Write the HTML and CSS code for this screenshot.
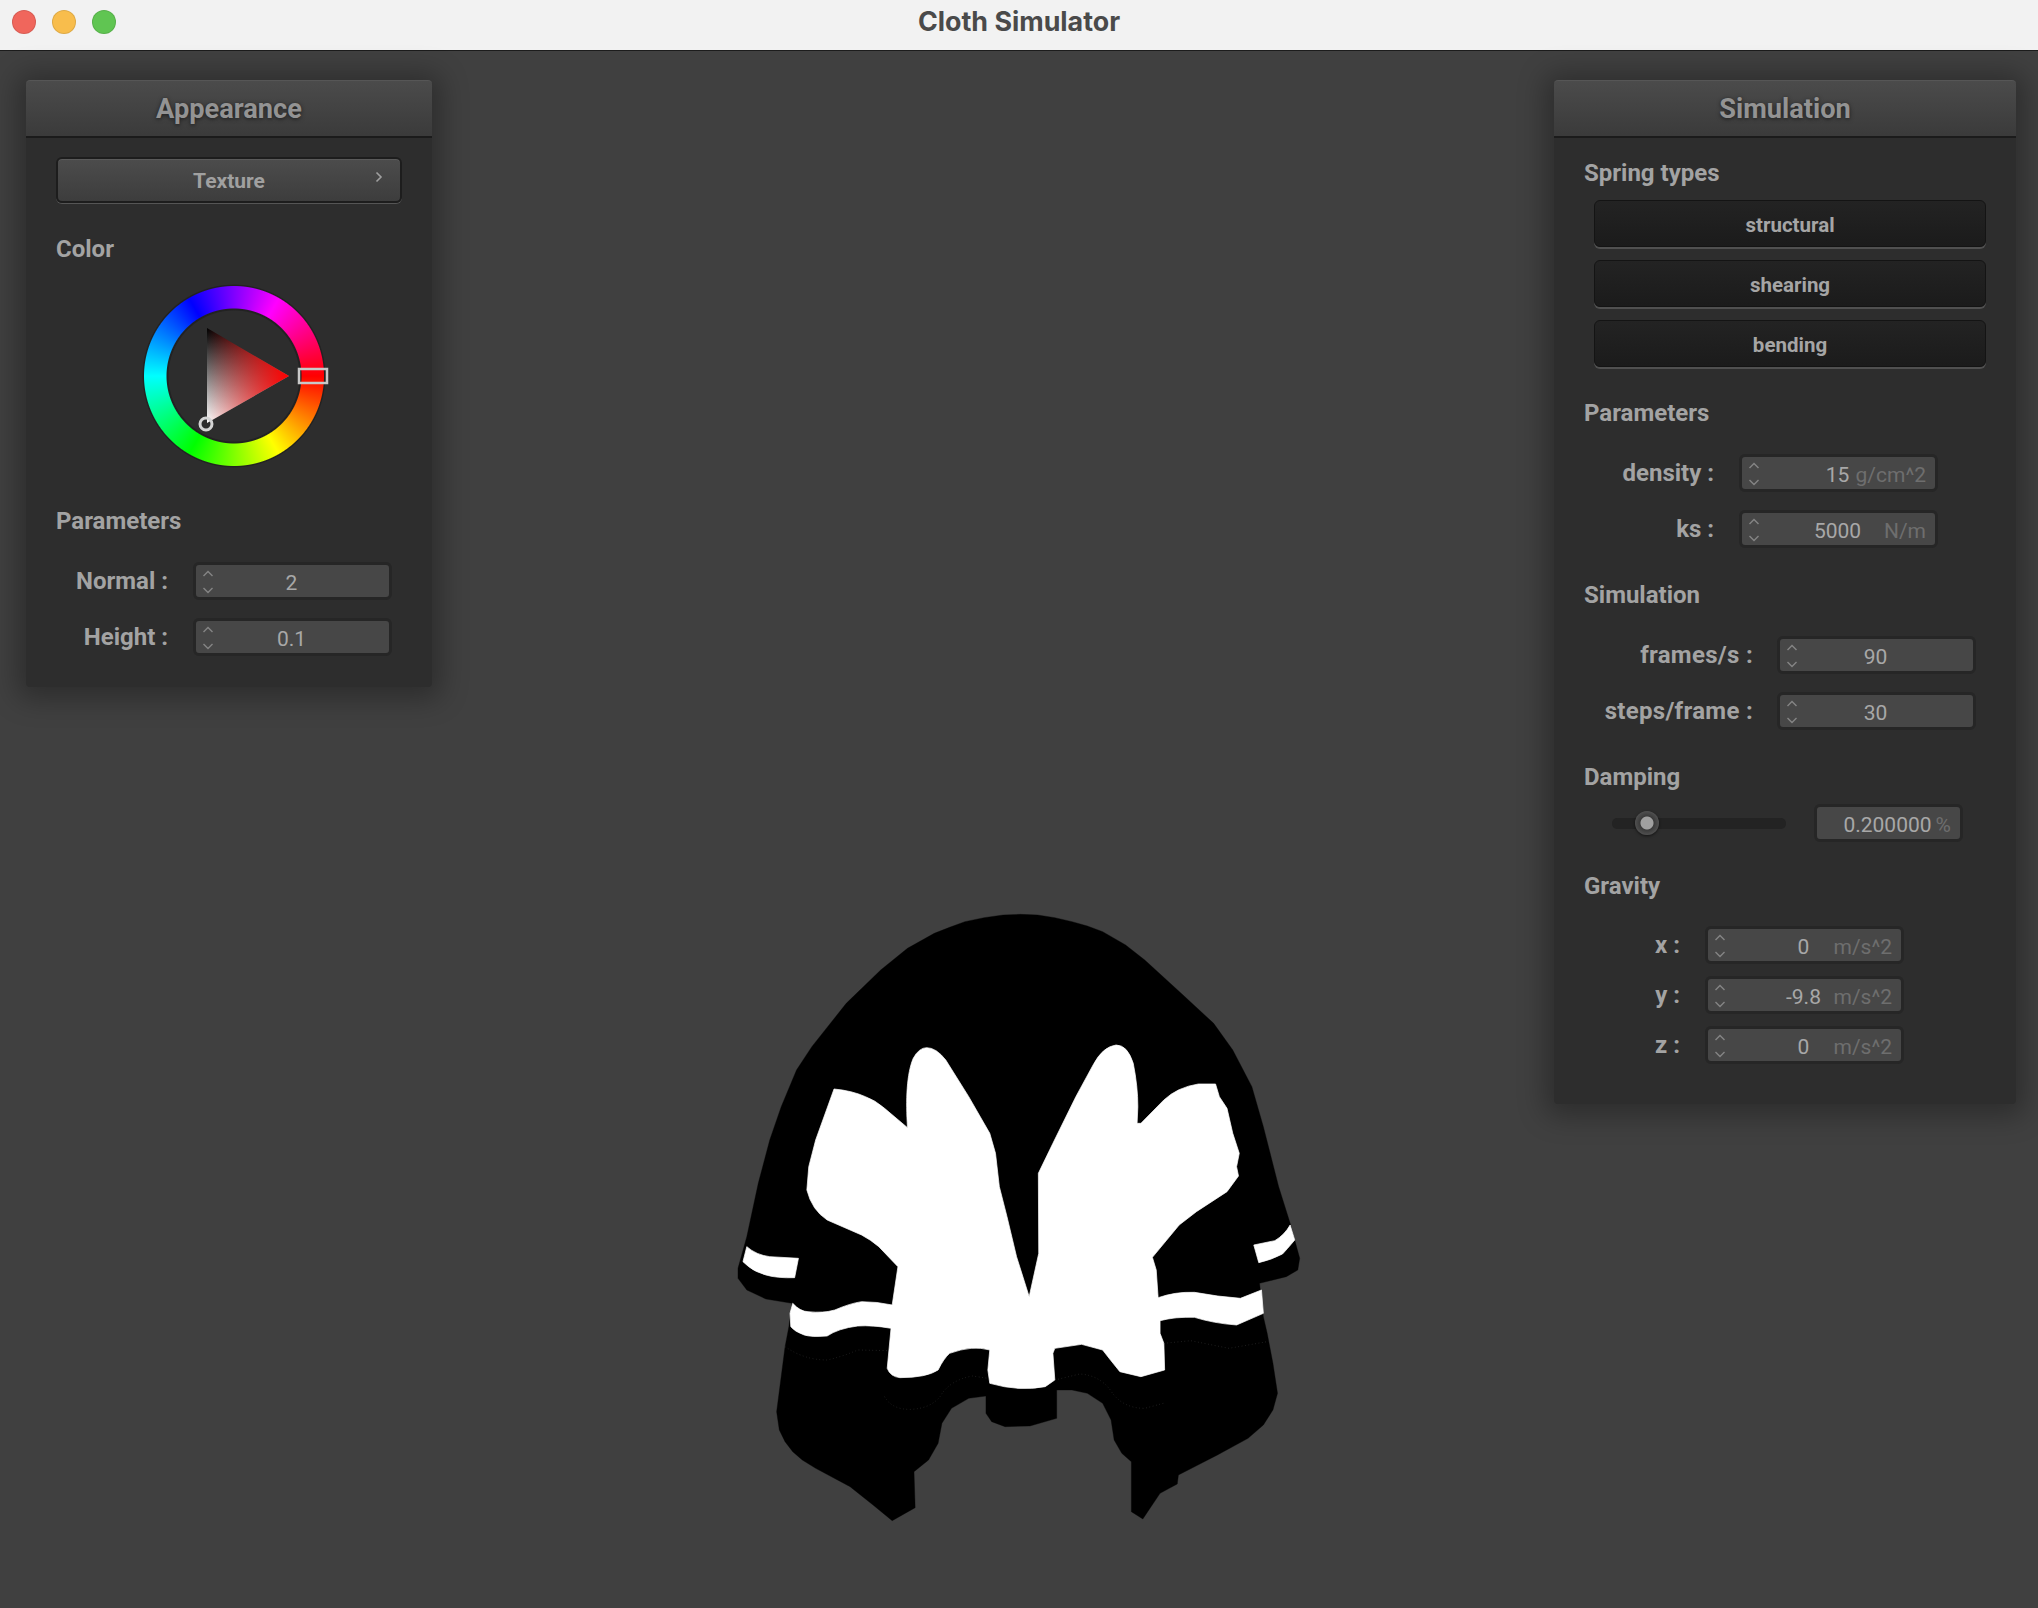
FILE: index.html
```html
<!DOCTYPE html>
<html lang="en">
<head>
<meta charset="utf-8">
<title>Cloth Simulator</title>
<link rel="stylesheet" href="styles.css">
</head>
<body>
<svg class="defs" width="0" height="0" aria-hidden="true">
  <symbol id="spin" viewBox="0 0 12 24">
    <path d="M1.5 6 L6 1.5 L10.500 6 M1.500 18 L6 22.500 L10.500 18" fill="none" stroke="currentColor" stroke-width="1.400"/>
  </symbol>
</svg>
<div class="app">
  <header class="titlebar">
    <div class="lights">
      <span class="light light-red"></span>
      <span class="light light-yellow"></span>
      <span class="light light-green"></span>
    </div>
    <h1 class="title">Cloth Simulator</h1>
  </header>
  <main class="canvas">
    <svg class="cloth" width="2038" height="1557" viewBox="0 51 2038 1557" aria-hidden="true">
      <g transform="translate(720 900) scale(.38265 .33333)">
        <polygon class="c-black" points="47,1105 70,1010 100,850 130,720 160,620 200,510 240,440 330,310 420,210 490,145 560,100 600,82 640,65 690,53 740,45 785,43 830,45 875,53 920,65 960,78 1000,95 1060,135 1110,180 1210,285 1290,370 1340,450 1390,560 1420,680 1460,860 1490,970 1515,1075 1510,1110 1480,1130 1410,1150 1420,1250 1430,1300 1445,1390 1457,1480 1445,1530 1420,1575 1380,1615 1300,1665 1198,1725 1195,1752 1150,1780 1105,1857 1075,1835 1075,1685 1050,1660 1030,1620 1022,1560 1000,1510 960,1480 920,1470 880,1470 880,1555 810,1578 745,1580 710,1565 695,1540 695,1488 650,1495 605,1525 580,1570 570,1630 545,1680 507,1715 510,1823 450,1862 400,1815 340,1760 250,1705 215,1680 190,1655 170,1625 155,1590 148,1535 170,1340 180,1280 188,1210 120,1197 70,1170 47,1135"/>
        <path class="c-white" d="M490,683 C485,600 488,520 505,475 Q520,443 540,443 Q565,443 590,480 L650,590 L705,700 L720,760 L730,860 L750,950 L775,1070 L808,1190 L833,1060 L832,820 L870,730 L930,590 L975,495 Q1000,440 1035,435 Q1065,435 1080,490 Q1092,560 1092,620 L1090,670 L1100,670 L1160,600 Q1195,562 1250,552 L1295,552 L1305,590 L1325,625 L1340,700 L1357,760 L1350,800 L1355,828 L1325,875 L1245,935 L1200,975 L1130,1072 L1140,1110 L1145,1193 Q1190,1175 1240,1177 Q1300,1190 1360,1195 L1415,1170 L1420,1240 L1350,1275 Q1290,1270 1240,1252 Q1190,1250 1150,1262 L1150,1300 L1160,1330 L1162,1410 L1100,1430 L1045,1415 Q1020,1380 1000,1350 L945,1333 L875,1345 L870,1360 L875,1440 L850,1460 Q780,1475 705,1450 L700,1410 L705,1350 Q660,1335 600,1360 Q585,1375 570,1410 Q540,1433 470,1433 Q445,1430 437,1405 L447,1285 Q400,1275 360,1278 Q310,1285 280,1308 Q240,1312 220,1305 Q195,1295 185,1280 L183,1240 L190,1210 Q210,1235 230,1235 Q270,1240 300,1230 Q340,1210 370,1205 Q410,1205 450,1215 L465,1100 L415,1040 Q395,1020 370,1005 L280,960 Q240,930 227,870 L232,800 L250,720 L298,567 Q345,572 380,590 Q405,600 430,625 Z"/>
        <path class="c-white" d="M70,1040 Q95,1065 130,1070 L205,1075 L195,1133 Q150,1135 120,1125 Q90,1115 75,1100 L60,1085 Z"/>
        <path class="c-white" d="M1395,1035 L1450,1022 Q1475,1005 1490,975 L1502,1020 Q1480,1050 1470,1062 Q1440,1080 1408,1088 Z"/>
        <path class="c-seam" d="M170 1340 Q220 1380 280 1380 Q320 1370 360 1350 L440 1352 M430 1490 Q450 1530 500 1528 Q550 1525 575 1490 Q600 1440 660 1428 L700 1435 M875 1440 L940 1422 Q990 1425 1020 1470 Q1050 1525 1110 1525 L1165 1508 M1160 1330 L1230 1322 L1330 1345 L1430 1325"/>
      </g>
    </svg>

    <section class="panel panel-appearance">
      <h2 class="panel-head">Appearance</h2>
      <div class="panel-body">
        <button class="popup">Texture<svg class="popup-chevron" width="8" height="12" viewBox="0 0 8 12"><path d="M1.500 1.500 L6 6 L1.500 10.500" fill="none" stroke="currentColor" stroke-width="1.600"/></svg></button>
        <h3 class="label label-color">Color</h3>
        <div class="wheel">
          <div class="wheel-ring"></div>
          <svg class="wheel-marks" width="184" height="184" viewBox="142 284 184 184" aria-hidden="true">
            <defs>
              <linearGradient id="tri-v" gradientUnits="userSpaceOnUse" x1="0" y1="328" x2="0" y2="423">
                <stop offset="0" stop-color="#000"/><stop offset="1" stop-color="#fff"/>
              </linearGradient>
              <linearGradient id="tri-h" gradientUnits="userSpaceOnUse" x1="207" y1="0" x2="289" y2="0">
                <stop offset="0" stop-color="#f00" stop-opacity="0"/><stop offset="1" stop-color="#f00"/>
              </linearGradient>
            </defs>
            <polygon points="207,328 289,376 207,423" fill="url(#tri-v)"/>
            <polygon points="207,328 289,376 207,423" fill="url(#tri-h)"/>
            <rect x="299" y="369" width="28" height="14" class="hue-mark"/>
            <circle cx="206" cy="424" r="6" class="sv-mark"/>
          </svg>
        </div>
        <h3 class="label label-params">Parameters</h3>
        <div class="rows">
          <div class="row row-app"><span class="row-name">Normal :</span><div class="field"><svg class="spin"><use href="#spin"/></svg><span class="value">2</span></div></div>
          <div class="row row-app"><span class="row-name">Height :</span><div class="field"><svg class="spin"><use href="#spin"/></svg><span class="value">0.1</span></div></div>
        </div>
      </div>
    </section>

    <section class="panel panel-simulation">
      <h2 class="panel-head">Simulation</h2>
      <div class="panel-body">
        <h3 class="label label-springs">Spring types</h3>
        <div class="toggles">
          <button class="toggle">structural</button>
          <button class="toggle">shearing</button>
          <button class="toggle">bending</button>
        </div>
        <h3 class="label label-s-params">Parameters</h3>
        <div class="rows">
          <div class="row row-param"><span class="row-name">density :</span><div class="field"><svg class="spin"><use href="#spin"/></svg><span class="value">15</span><span class="unit">g/cm^2</span></div></div>
          <div class="row row-param"><span class="row-name">ks :</span><div class="field"><svg class="spin"><use href="#spin"/></svg><span class="value">5000</span><span class="unit">N/m</span></div></div>
        </div>
        <h3 class="label label-s-sim">Simulation</h3>
        <div class="rows">
          <div class="row row-sim"><span class="row-name">frames/s :</span><div class="field"><svg class="spin"><use href="#spin"/></svg><span class="value">90</span></div></div>
          <div class="row row-sim"><span class="row-name">steps/frame :</span><div class="field"><svg class="spin"><use href="#spin"/></svg><span class="value">30</span></div></div>
        </div>
        <h3 class="label label-s-damp">Damping</h3>
        <div class="damping">
          <div class="slider"><span class="knob"></span></div>
          <div class="field field-damp"><span class="value">0.200000</span><span class="unit">%</span></div>
        </div>
        <h3 class="label label-s-grav">Gravity</h3>
        <div class="rows rows-tight">
          <div class="row row-grav"><span class="row-name">x :</span><div class="field"><svg class="spin"><use href="#spin"/></svg><span class="value">0</span><span class="unit">m/s^2</span></div></div>
          <div class="row row-grav"><span class="row-name">y :</span><div class="field"><svg class="spin"><use href="#spin"/></svg><span class="value">-9.8</span><span class="unit">m/s^2</span></div></div>
          <div class="row row-grav"><span class="row-name">z :</span><div class="field"><svg class="spin"><use href="#spin"/></svg><span class="value">0</span><span class="unit">m/s^2</span></div></div>
        </div>
      </div>
    </section>
  </main>
</div>
</body>
</html>
```
FILE: styles.css
```css
* { box-sizing: border-box; }
html, body { margin: 0; height: 100%; }
body { background: #404040; font-family: Roboto, "Liberation Sans", sans-serif; overflow: hidden; }
.defs { position: absolute; }
.app { width: 2038px; height: 1608px; display: flex; flex-direction: column; }

.titlebar { height: 51px; flex: none; display: flex; align-items: center; justify-content: center; background: #f2f2f2; border-bottom: 1px solid #1c1c1c; position: relative; }
.lights { position: absolute; left: 12px; top: 10px; display: flex; gap: 16px; }
.light { width: 24px; height: 24px; border-radius: 50%; border: 1px solid rgba(0,0,0,.1); }
.light-red { background: #f0665c; }
.light-yellow { background: #f8bd4c; }
.light-green { background: #60c552; }
.title { margin: 0 0 9px; font: 700 26.800px Inter, Roboto, sans-serif; color: #4a4a4a; }

.canvas { flex: 1; position: relative; background: #404040; }
.cloth { position: absolute; left: 0; top: 0; }
.c-black { fill: #000; stroke: #000; stroke-linejoin: round; }
.c-white { fill: #fff; stroke: #fff; stroke-width: 2; stroke-linejoin: round; }
.c-seam { fill: none; stroke: #484848; stroke-width: 1.500; stroke-dasharray: 2 7; }

.panel { position: absolute; top: 29px; background: #2d2d2d; box-shadow: 0 3px 28px 9px rgba(0,0,0,.3); border-radius: 4px; display: flex; flex-direction: column; }
.panel-appearance { left: 26px; width: 406px; }
.panel-simulation { left: 1554px; width: 462px; }
.panel-head { margin: 0; height: 58px; padding-bottom: 2px; display: flex; align-items: center; justify-content: center; font: 700 27.200px Roboto, sans-serif; color: #939393; text-shadow: 0 1px 4px rgba(0,0,0,.6); background: linear-gradient(#4b4b4b, #3a3a3a); border-top: 1px solid #565656; border-radius: 4px 4px 0 0; box-shadow: inset 0 -3px 0 -1px #1b1b1b; }
.panel-body { display: flex; flex-direction: column; padding: 0 30px; }
.panel-appearance .panel-body { padding-bottom: 31px; }
.panel-simulation .panel-body { padding-bottom: 40px; }

.label { margin: 0; height: 30px; font: 700 24px/30px Roboto, sans-serif; color: #a3a3a3; }
.label-color { margin-top: 31px; }
.label-params { margin-top: 38px; }
.label-springs { margin-top: 20px; }
.label-s-params { margin-top: 31px; }
.label-s-sim { margin-top: 32px; }
.label-s-damp { margin-top: 32px; }
.label-s-grav { margin-top: 29px; }

.popup { margin: 19px 0 0; width: 346px; height: 46px; position: relative; display: block; padding: 2px 0 0; font: 700 21px Roboto, sans-serif; color: #a0a0a0; background: linear-gradient(#4c4c4c, #3d3d3d); border: 2px solid #1d1d1d; border-radius: 6px; box-shadow: inset 0 1px 0 #5a5a5a, 0 1px 0 #555; }
.popup-chevron { position: absolute; right: 17px; top: 12px; color: #a0a0a0; }

.wheel { margin: 20px 0 0 86px; width: 184px; height: 184px; position: relative; border-radius: 50%; background: radial-gradient(circle closest-side, transparent 65px, #222 66px, #222 91px, transparent 92px); }
.wheel-ring { width: 184px; height: 184px; border-radius: 50%; background: conic-gradient(from 90deg, #f00, #ff0, #0f0, #0ff, #00f, #f0f, #f00); -webkit-mask: radial-gradient(circle closest-side, transparent 67px, #000 68px, #000 89.500px, transparent 90.500px); mask: radial-gradient(circle closest-side, transparent 67px, #000 68px, #000 89.500px, transparent 90.500px); }
.wheel-marks { position: absolute; left: 0; top: 0; overflow: visible; }
.hue-mark { fill: none; stroke: #c8c8c8; stroke-width: 2.500; }
.sv-mark { fill: none; stroke: #d4d4d4; stroke-width: 3; }

.rows { display: flex; flex-direction: column; gap: 18px; }
.rows-tight { gap: 12px; margin-top: 25px; }
.label-params + .rows { margin-top: 26px; }
.label-s-params + .rows, .label-s-sim + .rows { margin-top: 26px; }
.row { display: flex; align-items: center; gap: 25px; height: 38px; }
.row-name { text-align: right; flex: none; font: 700 24px Roboto, sans-serif; color: #a3a3a3; }
.row-app .row-name { width: 112px; }
.row-param .row-name { width: 130px; }
.row-sim .row-name { width: 169px; letter-spacing: .3px; }
.row-sim { gap: 24px; }
.row-grav .row-name { width: 96px; }

.field { position: relative; width: 199px; height: 38px; padding: 4px 2px 0 0; display: flex; align-items: center; justify-content: center; background: #474747; border: 3px solid #262626; border-radius: 6px; font: 400 21px Roboto, sans-serif; color: #a8a8a8; }
.spin { position: absolute; left: 6px; top: 5px; width: 12px; height: 24px; color: #858585; }
.unit { position: absolute; right: 9px; top: calc(50% + 2px); transform: translateY(-50%); color: #6e6e6e; }

.toggles { display: flex; flex-direction: column; gap: 13px; margin-top: 12px; margin-left: 10px; }
.toggle { width: 392px; height: 47px; padding: 2px 0 0; font: 700 20.500px Roboto, sans-serif; color: #a5a5a5; background: linear-gradient(#232323, #1b1b1b); border: 1px solid #141414; border-radius: 6px; box-shadow: 0 2px 0 #505050; }

.damping { margin-top: 12px; display: flex; align-items: center; gap: 28px; padding-left: 28px; }
.slider { width: 174px; height: 11px; background: #232323; border-radius: 5px; position: relative; }
.knob { position: absolute; left: 23px; top: -7px; width: 24px; height: 24px; border-radius: 50%; background: radial-gradient(circle at center, #a0a0a0 0, #a0a0a0 6px, #3a3a3a 7px, #505050 12px); box-shadow: 0 1px 3px rgba(0,0,0,.6); }
.field-damp { width: 149px; }
```
